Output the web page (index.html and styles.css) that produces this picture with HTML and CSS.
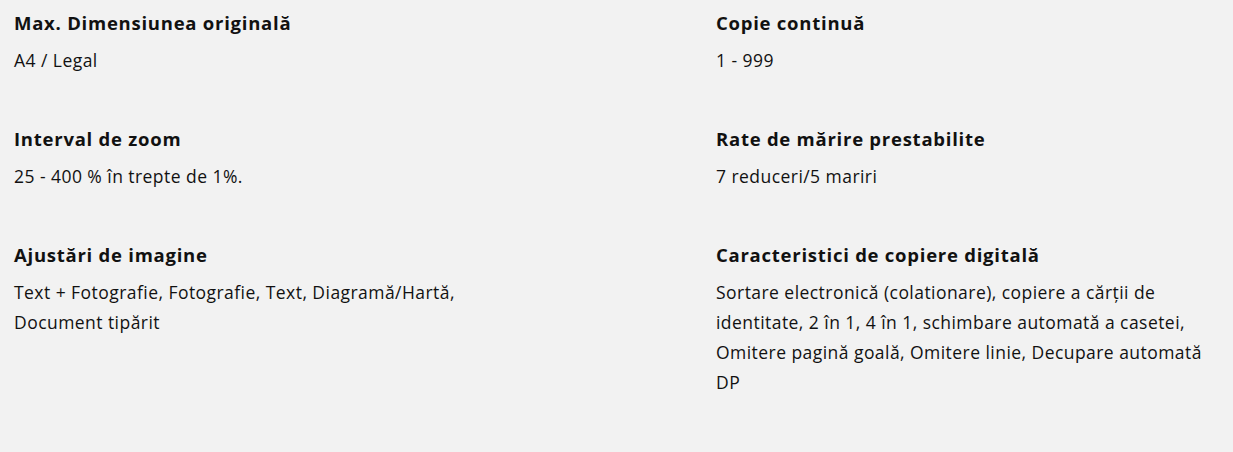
FILE: index.html
```html
<!DOCTYPE html>
<html lang="ro">
<head>
<meta charset="utf-8">
<link rel="stylesheet" href="styles.css">
</head>
<body>
<div class="specs">
  <div class="spec">
    <h3 class="spec-title">Max. Dimensiunea originală</h3>
    <p class="spec-value">A4 / Legal</p>
  </div>
  <div class="spec">
    <h3 class="spec-title">Copie continuă</h3>
    <p class="spec-value">1 - 999</p>
  </div>
  <div class="spec">
    <h3 class="spec-title">Interval de zoom</h3>
    <p class="spec-value">25 - 400 % în trepte de 1%.</p>
  </div>
  <div class="spec">
    <h3 class="spec-title">Rate de mărire prestabilite</h3>
    <p class="spec-value">7 reduceri/5 mariri</p>
  </div>
  <div class="spec">
    <h3 class="spec-title">Ajustări de imagine</h3>
    <p class="spec-value">Text + Fotografie, Fotografie, Text, Diagramă/Hartă, Document tipărit</p>
  </div>
  <div class="spec">
    <h3 class="spec-title">Caracteristici de copiere digitală</h3>
    <p class="spec-value">Sortare electronică (colationare), copiere a cărții de identitate, 2 în 1, 4 în 1, schimbare automată a casetei, Omitere pagină goală, Omitere linie, Decupare automată DP</p>
  </div>
</div>
</body>
</html>
```

FILE: styles.css
```css
html, body {
  margin: 0;
  padding: 0;
  background: #f2f2f2;
}
body {
  font-family: "Open Sans", Lato, "Liberation Sans", sans-serif;
  color: #111;
  font-variant-ligatures: none;
}
.specs {
  display: grid;
  grid-template-columns: 495px 495px;
  column-gap: 207px;
  row-gap: 49px;
  padding: 8px 14px 0 14px;
}
.spec-title {
  margin: 0 0 7px 0;
  font-size: 18.5px;
  line-height: 30px;
  font-weight: 700;
  letter-spacing: 0.75px;
}
.spec-value {
  margin: 0;
  font-size: 17.5px;
  line-height: 30px;
  font-weight: 400;
  letter-spacing: 0.45px;
}
```
